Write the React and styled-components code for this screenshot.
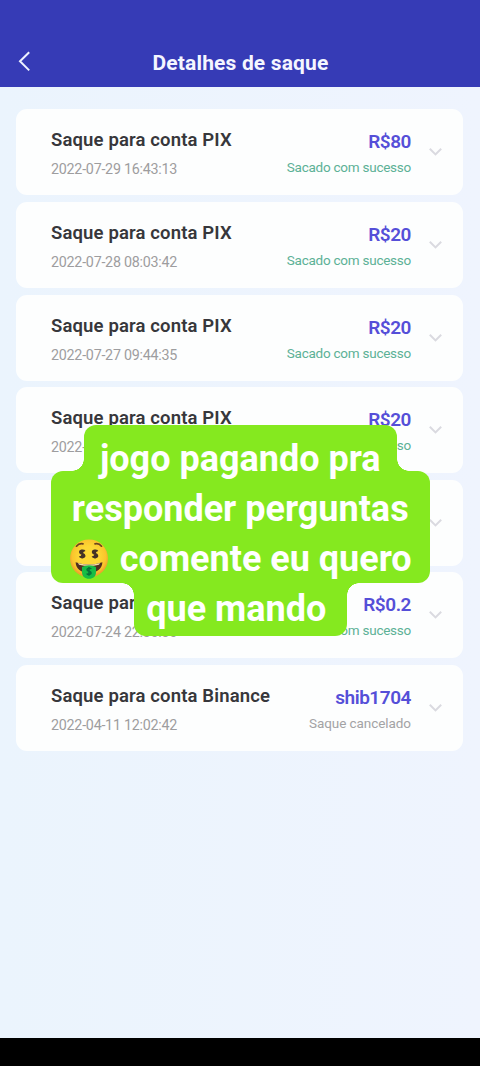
import React from "react";
import styled, { createGlobalStyle } from "styled-components";

const Global = createGlobalStyle`
  * { box-sizing: border-box; }
  body { margin: 0; background: #edf4fe; font-family: Roboto, "Liberation Sans", sans-serif; }
`;
const Screen = styled.div`
  position: relative;
  display: flex;
  flex-direction: column;
  width: 480px;
  height: 1066px;
  overflow: hidden;
  background: linear-gradient(90deg, #ebf4fd, #eff4fe);
`;
const Header = styled.header`
  display: flex;
  align-items: flex-end;
  height: 87px;
  flex: none;
  padding: 0 18px 9px 16px;
  background: #363bb6;
  color: #f4f6ff;
`;
const BackIcon = styled.svg`
  width: 18px;
  height: 32px;
  flex: none;
`;
const Heading = styled.h1`
  flex: 1;
  margin: 0;
  padding-right: 15px;
  text-align: center;
  font-size: 21px;
  line-height: 30px;
  font-weight: 700;
  letter-spacing: 0.15px;
`;
const List = styled.main`
  flex: 1;
  display: flex;
  flex-direction: column;
  gap: 6.6px;
  padding: 22.4px 17px 0 16px;
`;
const Card = styled.article`
  display: flex;
  height: 86px;
  flex: none;
  padding: 0 20px 0 35px;
  border-radius: 11px;
  background: #fdfefe;
`;
const Info = styled.div`
  flex: 1;
  display: flex;
  flex-direction: column;
  gap: 7px;
  padding-top: 19px;
  white-space: nowrap;
`;
const Title = styled.div`
  height: 24px;
  font-size: 18.5px;
  line-height: 24px;
  font-weight: 600;
  letter-spacing: 0.14px;
  color: #37373b;
`;
const Stamp = styled.div`
  font-size: 14.3px;
  line-height: 20px;
  color: #9d9d9f;
  letter-spacing: -0.25px;
`;
const Result = styled.div`
  display: flex;
  flex-direction: column;
  align-items: flex-end;
  gap: 3px;
  padding-top: 21px;
  margin-right: 17px;
  white-space: nowrap;
`;
const Amount = styled.div`
  height: 24px;
  font-size: 19px;
  line-height: 24px;
  font-weight: 600;
  color: #554fd8;
  letter-spacing: -0.45px;
`;
const Status = styled.div`
  font-size: 13.5px;
  line-height: 20px;
  letter-spacing: ${(p) => (p.$cancelled ? "-0.07px" : "-0.25px")};
  color: ${(p) => (p.$cancelled ? "#a3a3a5" : "#5cb196")};
`;
const Chevron = styled.svg`
  width: 15px;
  height: 12px;
  margin-top: 37px;
  flex: none;
`;
const NavBar = styled.footer`
  height: 28px;
  flex: none;
  background: #000;
`;

const Caption = styled.div`
  position: absolute;
  left: 51px;
  top: 425px;
  width: 378.5px;
  display: flex;
  flex-direction: column;
  color: #fff;
  font-size: 36px;
  font-weight: 700;
  line-height: 50px;
  white-space: nowrap;
`;
const green = "#85e91f";
const corner = (at) => `radial-gradient(circle at ${at}, transparent 11.5px, ${green} 12px)`;
const Tab = styled.div`
  position: relative;
  z-index: 1;
  height: ${(p) => p.$height}px;
  width: ${(p) => p.$width}px;
  margin-left: ${(p) => p.$left}px;
  background: ${green};
  border-radius: ${(p) => (p.$lower ? "0 0 12px 12px" : "12px 12px 0 0")};
  padding: ${(p) => (p.$lower ? "2px 8px 0 0" : "9.5px 0 0")};
  &::before, &::after {
    content: "";
    position: absolute;
    ${(p) => (p.$lower ? "top: 0" : "bottom: 0")};
    width: 12px;
    height: 12px;
  }
  &::before {
    right: 100%;
    background: ${(p) => corner(p.$lower ? "0 100%" : "0 0")};
  }
  &::after {
    left: 100%;
    background: ${(p) => corner(p.$lower ? "100% 100%" : "100% 0")};
  }
`;
const Block = styled.div`
  height: 112px;
  background: ${green};
  border-radius: 12px;
  padding-top: 13.5px;
`;
const Line = styled.div`
  display: flex;
  justify-content: center;
  align-items: center;
  gap: 11px;
  height: 49.7px;
`;
const EmojiSvg = styled.svg`
  width: 40px;
  height: 42px;
  flex: none;
`;

function MoneyFace() {
  const dollar = "M4 -4.4C3 -6.4 -3.6 -6.6 -3.6 -3.2C-3.6 0.2 3.8 -0.6 3.8 3.1C3.8 6.4 -3.2 6.2 -4 3.8M0 -8V8";
  return (
    <EmojiSvg viewBox="0 0 40 42">
      <defs>
        <radialGradient id="face" cx="50%" cy="45%" r="52%">
          <stop offset="0.5" stopColor="#fdd835" />
          <stop offset="0.85" stopColor="#fbc52c" />
          <stop offset="1" stopColor="#f0a22c" />
        </radialGradient>
      </defs>
      <circle cx="20" cy="20.4" r="19" fill="url(#face)" />
      <path d="M7.5 8.2Q10 4.9 14 5.8M26 5.8Q30 4.9 32.5 8.2" fill="none" stroke="#6b4420" strokeWidth="1.7" strokeLinecap="round" />
      <g fill="none" stroke="#443326" strokeWidth="4">
        <path transform="translate(13.2 16) scale(.57)" d={dollar} />
        <path transform="translate(26 16) scale(.57)" d={dollar} />
      </g>
      <path d="M6.6 24.2Q20 28.6 33.4 24.2C33 31 28 34.6 20 34.6S7 31 6.6 24.2Z" fill="#503020" />
      <path d="M9 25Q20 28.2 31 25L30 26.8Q20 29.4 10 26.8Z" fill="#f4dfaa" />
      <path d="M13 29Q20 25.6 27 29V34C27 38.5 24.2 40.8 20 40.8S13 38.5 13 34Z" fill="#16bd45" />
      <path transform="translate(20 33.4) scale(.55)" d={dollar} fill="none" stroke="#087039" strokeWidth="2.8" />
    </EmojiSvg>
  );
}

const ok = "Sacado com sucesso";
const rows = [
  ["Saque para conta PIX", "2022-07-29 16:43:13", "R$80", ok],
  ["Saque para conta PIX", "2022-07-28 08:03:42", "R$20", ok],
  ["Saque para conta PIX", "2022-07-27 09:44:35", "R$20", ok],
  ["Saque para conta PIX", "2022-07-26", "R$20", ok],
  ["", "", "", ""],
  ["Saque para conta PIX", "2022-07-24 22:30:30", "R$0.2", ok],
  ["Saque para conta Binance", "2022-04-11 12:02:42", "shib1704", "Saque cancelado"],
];

export default function App() {
  return (
    <Screen>
      <Global />
      <Header>
        <BackIcon viewBox="0 0 18 32">
          <path d="M13.2 6.2L4 15.3L13.2 24.4" fill="none" stroke="#eef2ff" strokeWidth="2" />
        </BackIcon>
        <Heading>Detalhes de saque</Heading>
      </Header>
      <List>
        {rows.map(([title, stamp, amount, status], i) => (
          <Card key={i}>
            <Info>
              <Title>{title}</Title>
              <Stamp>{stamp}</Stamp>
            </Info>
            <Result>
              <Amount>{amount}</Amount>
              <Status $cancelled={status !== ok}>{status}</Status>
            </Result>
            <Chevron viewBox="0 0 15 12">
              <path d="M1.8 2.8L7.5 8.4L13.2 2.8" fill="none" stroke="#dadae0" strokeWidth="2" />
            </Chevron>
          </Card>
        ))}
      </List>
      <NavBar />
      <Caption>
        <Tab $left={33} $width={312.5} $height={45.5}>
          <Line>jogo pagando pra</Line>
        </Tab>
        <Block>
          <Line>responder perguntas</Line>
          <Line>
            <MoneyFace />
            comente eu quero
          </Line>
        </Block>
        <Tab $lower $left={83} $width={212.5} $height={53.5}>
          <Line>que mando</Line>
        </Tab>
      </Caption>
    </Screen>
  );
}
